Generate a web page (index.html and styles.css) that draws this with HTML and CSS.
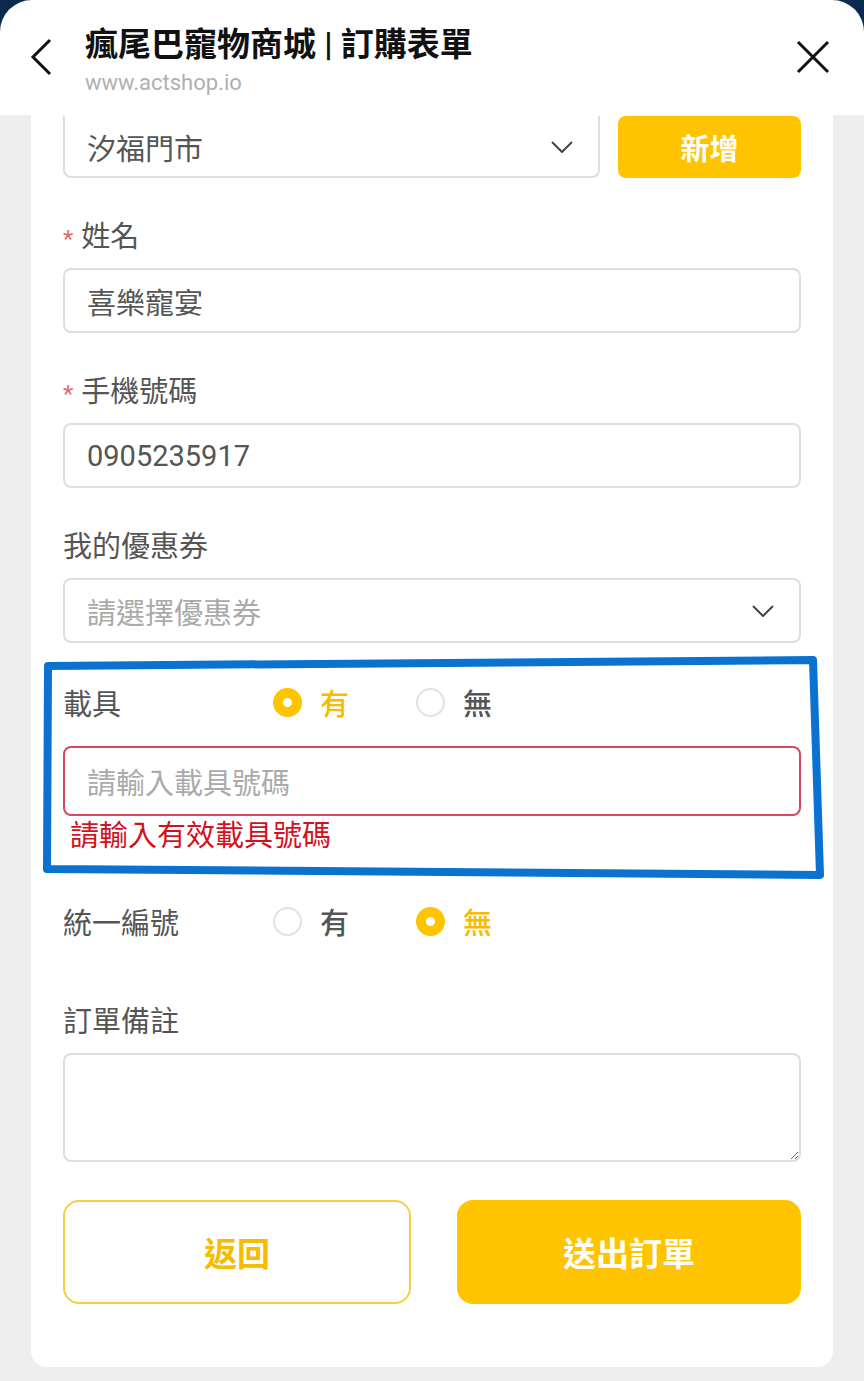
FILE: index.html
```html
<!DOCTYPE html>
<html>
  <head>
    <meta name="viewport" content="width=device-width, initial-scale=1">
    <link rel="stylesheet" href="styles.css">
  </head>
  <body>
    <div class="screen">
      <header class="topbar">
        <button class="icon-btn back" aria-label="back">
          <svg width="28" height="40" viewBox="0 0 28 40"><path d="M22 3 L5 20 L22 37" fill="none" stroke="#111" stroke-width="3"/></svg>
        </button>
        <div class="titles">
          <h1>瘋尾巴寵物商城 | 訂購表單</h1>
          <p class="url">www.actshop.io</p>
        </div>
        <button class="icon-btn close" aria-label="close">
          <svg width="34" height="34" viewBox="0 0 34 34"><path d="M2 2 L32 32 M32 2 L2 32" fill="none" stroke="#111" stroke-width="3"/></svg>
        </button>
      </header>

      <main class="page">
        <div class="card">
          <div class="store-row">
            <div class="field-box select">
              <span>汐福門市</span>
              <svg class="chev" width="22" height="12" viewBox="0 0 22 12"><path d="M1 1 L11 11 L21 1" fill="none" stroke="#444" stroke-width="2"/></svg>
            </div>
            <button class="add-btn">新增</button>
          </div>

          <div class="field">
            <label class="label"><span class="req">*</span>姓名</label>
            <div class="field-box">喜樂寵宴</div>
          </div>

          <div class="field">
            <label class="label"><span class="req">*</span>手機號碼</label>
            <div class="field-box">0905235917</div>
          </div>

          <div class="field">
            <label class="label">我的優惠券</label>
            <div class="field-box select placeholder">
              <span>請選擇優惠券</span>
              <svg class="chev" width="22" height="12" viewBox="0 0 22 12"><path d="M1 1 L11 11 L21 1" fill="none" stroke="#444" stroke-width="2"/></svg>
            </div>
          </div>

          <div class="choice-row">
            <span class="choice-label">載具</span>
            <div class="option checked"><span class="radio"></span>有</div>
            <div class="option"><span class="radio"></span>無</div>
          </div>
          <div class="field-box tall invalid placeholder">請輸入載具號碼</div>
          <p class="error">請輸入有效載具號碼</p>

          <div class="choice-row tax">
            <span class="choice-label">統一編號</span>
            <div class="option"><span class="radio"></span>有</div>
            <div class="option checked"><span class="radio"></span>無</div>
          </div>

          <div class="field note-field">
            <label class="label">訂單備註</label>
            <textarea class="note"></textarea>
          </div>

          <div class="actions">
            <button class="btn btn-outline">返回</button>
            <button class="btn btn-fill">送出訂單</button>
          </div>
        </div>
      </main>

      <!-- hand drawn highlight on the carrier block -->
      <svg class="markup" width="864" height="1381" viewBox="0 0 864 1381">
        <polygon points="48,666 813,660 820,875 47,869" fill="none" stroke="#0a72d1" stroke-width="8" stroke-linejoin="round"/>
      </svg>
    </div>
  </body>
</html>
```

FILE: styles.css
```css
body {
  margin: 0;
  font-family: Roboto, "Noto Sans CJK TC", sans-serif;
  color: #555;
}

.screen {
  position: relative;
  width: 864px;
  height: 1381px;
  background-color: #0b2a4f;
  overflow: hidden;
}

.topbar {
  display: flex;
  align-items: flex-start;
  height: 115px;
  background: #fff;
  border-radius: 32px 32px 0 0;
  box-sizing: border-box;
  padding: 24px 34px 0 28px;
}

.icon-btn {
  background: none;
  border: none;
  padding: 0;
  display: flex;
}

.back {
  margin-top: 13px;
}

.close {
  margin-top: 16px;
  margin-left: auto;
}

.titles {
  margin-left: 29px;
}

.titles h1 {
  margin: 0;
  font-size: 33px;
  line-height: 42px;
  font-weight: 700;
  color: #111;
}

.url {
  margin: 0;
  font-size: 22px;
  line-height: 34px;
  color: #b0b0b0;
}

.page {
  background-color: #eeeeee;
  padding: 0 31px 14px 31px;
}

.card {
  background: #fff;
  border-radius: 0 0 16px 16px;
  padding: 0 32px 63px 32px;
  height: 1252px;
  box-sizing: border-box;
}

.store-row {
  display: flex;
  gap: 18px;
}

.store-row .select {
  flex: 1;
  height: 63px;
  border-top-color: transparent;
  border-radius: 0 0 8px 8px;
}

.add-btn {
  width: 183px;
  height: 62px;
  margin-top: 1px;
  border: none;
  border-radius: 8px;
  background: #ffc400;
  color: #fff;
  font-family: "Noto Sans CJK TC", sans-serif;
  font-size: 29px;
  font-weight: 700;
}

.field {
  margin-top: 39px;
}

.label {
  display: block;
  height: 40px;
  font-size: 29px;
  line-height: 40px;
  margin-bottom: 11px;
  color: #555;
}

.req {
  color: #e46a6a;
  font-size: 24px;
  line-height: 1;
  margin-right: 8px;
}

.field-box {
  display: flex;
  align-items: center;
  height: 65px;
  box-sizing: border-box;
  border: 2px solid #dedede;
  border-radius: 8px;
  padding: 0 22px;
  font-size: 29px;
  color: #555;
}

.select .chev {
  margin-left: auto;
  margin-right: 3px;
}

.placeholder {
  color: #aaa;
}

.choice-row {
  display: flex;
  align-items: center;
  height: 40px;
  margin-top: 39px;
  font-size: 29px;
}

.choice-label {
  width: 210px;
  color: #555;
}

.option {
  display: flex;
  align-items: center;
  gap: 18px;
  width: 143px;
  color: #555;
  font-weight: 500;
}

.radio {
  width: 29px;
  height: 29px;
  box-sizing: border-box;
  border: 2px solid #e2e2e2;
  border-radius: 50%;
}

.option.checked {
  color: #f7bb00;
}

.option.checked .radio {
  border: 10px solid #ffc400;
  background: #fff;
}

.tall {
  height: 70px;
  margin-top: 24px;
}

.invalid {
  border-color: #d9465f;
}

.error {
  margin: 0;
  padding-left: 7px;
  font-size: 29px;
  line-height: 40px;
  color: #d3101f;
}

.choice-row.tax {
  margin-top: 45px;
}

.note-field {
  margin-top: 61px;
}

.note {
  display: block;
  width: 100%;
  height: 109px;
  box-sizing: border-box;
  border: 2px solid #dedede;
  border-radius: 8px;
  font-family: inherit;
  font-size: 29px;
}

.actions {
  display: flex;
  gap: 46px;
  margin-top: 38px;
}

.btn {
  flex: 1;
  height: 104px;
  border-radius: 16px;
  font-family: "Noto Sans CJK TC", sans-serif;
  font-size: 33px;
  font-weight: 700;
}

.btn-outline {
  background: #fff;
  border: 2px solid #f2cf45;
  color: #f7bb00;
}

.btn-fill {
  background: #ffc400;
  border: none;
  color: #fff;
}

.markup {
  position: absolute;
  top: 0;
  left: 0;
  pointer-events: none;
}
```
